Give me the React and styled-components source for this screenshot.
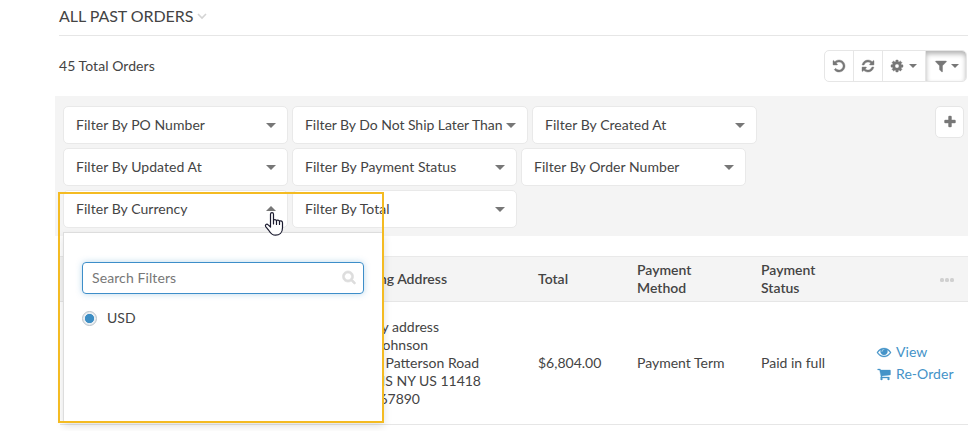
import React from 'react';
import styled, { createGlobalStyle, css } from 'styled-components';

const GlobalStyle = createGlobalStyle`
  *, *::before, *::after { box-sizing: border-box; }
  body {
    margin: 0;
    background: #fff;
    color: #444;
    font: 14px/18px Lato, "Open Sans", sans-serif;
    overflow: hidden;
  }
`;

const paths = {
  undo: 'M1664 896q0 156-61 298t-164 245-245 164-298 61q-172 0-327-72.5t-264-204.5q-7-10-6.5-22.5t8.5-20.5l137-138q10-9 25-9 16 2 23 12 73 95 179 147t225 52q104 0 198.5-40.5t163.5-109.5 109.5-163.5 40.5-198.5-40.5-198.5-109.5-163.5-163.5-109.5-198.5-40.5q-98 0-188 35.5t-160 101.5l137 138q31 30 14 69-17 40-59 40h-448q-26 0-45-19t-19-45v-448q0-42 40-59 39-17 69 14l130 129q107-101 244.5-156.5t284.5-55.5q156 0 298 61t245 164 164 245 61 298z',
  refresh: 'M1639 1056q0 5-1 7-64 268-268 434.5t-478 166.5q-146 0-282.5-55t-243.5-157l-129 129q-19 19-45 19t-45-19-19-45v-448q0-26 19-45t45-19h448q26 0 45 19t19 45-19 45l-137 137q71 66 161 102t187 36q134 0 250-65t186-179q11-17 53-117 8-23 30-23h192q13 0 22.5 9.5t9.5 22.5zm25-800v448q0 26-19 45t-45 19h-448q-26 0-45-19t-19-45 19-45l138-138q-148-137-349-137-134 0-250 65t-186 179q-11 17-53 117-8 23-30 23h-199q-13 0-22.5-9.5t-9.5-22.5v-7q65-268 270-434.5t480-166.5q146 0 284 55.5t245 156.5l130-129q19-19 45-19t45 19 19 45z',
  cog: 'M1152 896q0-106-75-181t-181-75-181 75-75 181 75 181 181 75 181-75 75-181zm512-109v222q0 12-8 23t-20 13l-185 28q-19 54-39 91 35 50 107 138 10 12 10 25t-9 23q-27 37-99 108t-94 71q-12 0-26-9l-138-108q-44 23-91 38-16 136-29 186-7 28-36 28h-222q-14 0-24.5-8.5t-11.5-21.5l-28-184q-49-16-90-37l-141 107q-10 9-25 9-14 0-25-11-126-114-165-168-7-10-7-23 0-12 8-23 15-21 51-66.5t54-70.5q-27-50-41-99l-183-27q-13-2-21-12.5t-8-23.5v-222q0-12 8-23t19-13l186-28q14-46 39-92-40-57-107-138-10-12-10-24 0-10 9-23 26-36 98.5-107.5t94.5-71.5q13 0 26 10l138 107q44-23 91-38 16-136 29-186 7-28 36-28h222q14 0 24.5 8.5t11.5 21.5l28 184q49 16 90 37l142-107q9-9 24-9 13 0 25 10 129 119 165 170 7 8 7 22 0 12-8 23-15 21-51 66.5t-54 70.5q26 50 41 98l183 28q13 2 21 12.5t8 23.5z',
  filter: 'M1595 295q17 41-14 70l-493 493v742q0 42-39 59-13 5-25 5-27 0-45-19l-256-256q-19-19-19-45v-486l-493-493q-31-29-14-70 17-39 59-39h1280q42 0 59 39z',
  plus: 'M1600 736v192q0 40-28 68t-68 28h-416v416q0 40-28 68t-68 28h-192q-40 0-68-28t-28-68v-416h-416q-40 0-68-28t-28-68v-192q0-40 28-68t68-28h416v-416q0-40 28-68t68-28h192q40 0 68 28t28 68v416h416q40 0 68 28t28 68z',
  search: 'M1216 832q0-185-131.5-316.5t-316.5-131.5-316.5 131.5-131.5 316.5 131.5 316.5 316.5 131.5 316.5-131.5 131.5-316.5zm512 832q0 52-38 90t-90 38q-54 0-90-38l-343-342q-179 124-399 124-143 0-273.5-55.5t-225-150-150-225-55.5-273.5 55.5-273.5 150-225 225-150 273.5-55.5 273.5 55.5 225 150 150 225 55.5 273.5q0 220-124 399l343 343q37 37 37 90z',
  eye: 'M1664 960q-152-236-381-353 61 104 61 225 0 185-131.5 316.5t-316.5 131.5-316.5-131.5-131.5-316.5q0-121 61-225-229 117-381 353 133 205 333.5 326.5t434.5 121.5 434.5-121.5 333.5-326.5zm-720-384q0-20-14-34t-34-14q-125 0-214.5 89.5t-89.5 214.5q0 20 14 34t34 14 34-14 14-34q0-86 61-147t147-61q20 0 34-14t14-34zm848 384q0 34-20 69-140 230-376.5 368.5t-499.5 138.5-499.5-139-376.5-368q-20-35-20-69t20-69q140-229 376.5-368t499.5-139 499.5 139 376.5 368q20 35 20 69z',
  cart: 'M704 1536q0 52-38 90t-90 38-90-38-38-90 38-90 90-38 90 38 38 90zm896 0q0 52-38 90t-90 38-90-38-38-90 38-90 90-38 90 38 38 90zm128-1088v512q0 24-16.5 42.5t-40.5 21.5l-1044 122q13 60 13 70 0 16-24 64h920q26 0 45 19t19 45-19 45-45 19h-1024q-26 0-45-19t-19-45q0-11 8-31.5t16-36 21.5-40 15.5-29.5l-177-823h-204q-26 0-45-19t-19-45 19-45 45-19h256q16 0 28.5 6.5t19.5 15.5 13 24.5 8 26 5.5 29.5 4.5 26h1201q26 0 45 19t19 45z',
};

const Glyph = styled.svg`
  display: block;
  flex: none;
  fill: currentColor;
  stroke: currentColor;
  stroke-width: ${p => p.$weight};
`;

const Icon = ({ name, size = 14, weight = 0 }) => (
  <Glyph $weight={weight} width={size} height={size} viewBox="0 0 1792 1792" overflow="visible" aria-hidden="true">
    <path d={paths[name]} />
  </Glyph>
);

const Caret = styled.span`
  flex: none;
  width: 0;
  height: 0;
  border: solid transparent;
  border-width: ${p => p.$size || 5}px ${p => p.$size || 5}px 0;
  border-top-color: #777;
  ${p => p.$up && css`
    border-width: 0 5px 5px;
    border-bottom-color: #777;
    margin-top: -2px;
  `}
`;

const Page = styled.main`
  position: relative;
  width: 973px;
  height: 431px;
  padding: 0 5px 0 55px;
  overflow: hidden;
`;

const Heading = styled.header`
  display: flex;
  align-items: center;
  gap: 4px;
  height: 36px;
  margin-left: 4px;
  padding-bottom: 3px;
  border-bottom: 1px solid #e6e6e6;
`;

const Title = styled.h1`
  margin: 0;
  font-size: 16px;
  line-height: 20px;
  font-weight: 400;
  letter-spacing: -0.06px;
`;

const Summary = styled.div`
  display: flex;
  align-items: center;
  justify-content: space-between;
  height: 60px;
  padding: 0 1px 0 4px;
`;

const Count = styled.span`
  letter-spacing: 0.06px;
`;

const Toolbar = styled.div`
  display: flex;
  height: 32px;
`;

const ToolButton = styled.button`
  display: flex;
  align-items: center;
  justify-content: center;
  gap: ${p => (p.$pressed ? 3 : 5)}px;
  width: ${p => p.$width}px;
  height: 32px;
  margin: 0 0 0 -1px;
  padding: 0 ${p => p.$nudge || 0}px 0 0;
  color: #777;
  background: #fff;
  border: 1px solid #e6e6e6;
  &:first-child { border-radius: 5px 0 0 5px; }
  &:last-child { border-radius: 0 5px 5px 0; }
  ${p => p.$pressed && css`box-shadow: inset 0 3px 5px rgba(0, 0, 0, 0.3);`}
`;

const FilterPanel = styled.section`
  display: flex;
  align-items: flex-start;
  justify-content: space-between;
  height: 140px;
  padding: 10px 4px 0 8px;
  background: #f4f4f4;
`;

const FilterRows = styled.div`
  display: flex;
  flex-direction: column;
  gap: 4px;
`;

const FilterRow = styled.div`
  position: relative;
  display: flex;
  gap: 4px;
`;

const FilterButton = styled.button`
  display: flex;
  align-items: center;
  justify-content: space-between;
  width: ${p => (p.$wide ? 236 : 225)}px;
  height: 38px;
  padding: 0 11px 0 12px;
  font: inherit;
  color: inherit;
  letter-spacing: ${p => (p.$wide ? -0.04 : 0.05)}px;
  white-space: nowrap;
  background: #fff;
  border: 1px solid #e9e9e9;
  border-radius: 5px;
`;

const AddButton = styled.button`
  display: flex;
  align-items: center;
  justify-content: center;
  width: 29px;
  height: 32px;
  padding: 0;
  color: #777;
  background: #fff;
  border: 1px solid #e6e6e6;
  border-radius: 5px;
`;

const Menu = styled.div`
  position: absolute;
  z-index: 2;
  top: 42px;
  left: 0;
  width: 321px;
  height: 190px;
  padding: 29px 20px 0 18px;
  background: #fff;
  border: 1px solid #ddd;
  border-right: 0;
  box-shadow: 0 4px 8px rgba(0, 0, 0, 0.12);
`;

const SearchBox = styled.label`
  display: flex;
  align-items: center;
  justify-content: space-between;
  height: 32px;
  padding: 0 7px 2px 9px;
  color: #ddd;
  border: 1px solid #3d8ec9;
  border-radius: 4px;
  box-shadow: 0 0 6px rgba(61, 142, 201, 0.35);
`;

const SearchInput = styled.input`
  width: 200px;
  padding: 2px 0 0;
  font: inherit;
  letter-spacing: 0.1px;
  border: 0;
  outline: 0;
  &::placeholder { color: #777; opacity: 1; }
`;

const Option = styled.div`
  display: flex;
  align-items: center;
  gap: 10px;
  margin-top: 15px;
`;

const Radio = styled.span`
  width: 15px;
  height: 15px;
  border: 1px solid #b9c2c9;
  border-radius: 50%;
  background: radial-gradient(circle, #3d8ec4 0 4.3px, #e9eef2 5px);
`;

const Table = styled.section`
  margin: 20px 0 0 5px;
`;

const TableRow = styled.div`
  display: grid;
  grid-template-columns: 478px 99px 124px 116px 1fr;
  align-items: center;
  height: 123px;
  border-bottom: 1px solid #e6e6e6;
`;

const HeadRow = styled(TableRow)`
  height: 46px;
  font-weight: 600;
  background: #f4f4f4;
  border-top: 1px solid #e9e9e9;
`;

const Address = styled.div`
  display: flex;
  flex-direction: column;
`;

const AddressLine = styled.span`
  width: ${p => p.$end}px;
  text-align: right;
`;

const Actions = styled.div`
  display: flex;
  flex-direction: column;
  gap: 4px;
  margin-left: -0.5px;
`;

const ActionLink = styled.a`
  display: flex;
  align-items: center;
  gap: 5.5px;
  color: #4593c8;
  letter-spacing: 0.06px;
`;

const More = styled.div`
  display: flex;
  justify-content: flex-end;
  gap: 1px;
  padding: 2px 14px 0 0;
`;

const Dot = styled.span`
  width: 4px;
  height: 4px;
  border-radius: 1.5px;
  background: #d0d0d0;
`;

const Highlight = styled.div`
  position: absolute;
  z-index: 3;
  left: 58px;
  top: 192px;
  width: 326px;
  height: 231px;
  border: 2px solid #f4bb22;
  pointer-events: none;
`;

const Pointer = styled.svg`
  position: absolute;
  z-index: 4;
  left: 264px;
  top: 211px;
`;

const Filter = ({ children, wide, open }) => (
  <FilterButton $wide={wide}>
    {children}
    <Caret $up={open} />
  </FilterButton>
);

export default function App() {
  return (
    <Page>
      <GlobalStyle />
      <Heading>
        <Title>ALL PAST ORDERS</Title>
        <svg width="10" height="8" viewBox="0 0 10 8" fill="none" stroke="#d4d4d4" strokeWidth="1.6">
          <path d="M1 2l4 4 4-4" />
        </svg>
      </Heading>
      <Summary>
        <Count>45 Total Orders</Count>
        <Toolbar>
          <ToolButton $width={30}><Icon name="undo" weight={50} /></ToolButton>
          <ToolButton $width={30}><Icon name="refresh" weight={50} /></ToolButton>
          <ToolButton $width={44} $nudge={2}><Icon name="cog" weight={50} /><Caret $size={4} /></ToolButton>
          <ToolButton $width={42} $pressed><Icon name="filter" weight={50} /><Caret $size={4} /></ToolButton>
        </Toolbar>
      </Summary>
      <FilterPanel>
        <FilterRows>
          <FilterRow>
            <Filter>Filter By PO Number</Filter>
            <Filter wide>Filter By Do Not Ship Later Than</Filter>
            <Filter>Filter By Created At</Filter>
          </FilterRow>
          <FilterRow>
            <Filter>Filter By Updated At</Filter>
            <Filter>Filter By Payment Status</Filter>
            <Filter>Filter By Order Number</Filter>
          </FilterRow>
          <FilterRow>
            <Filter open>Filter By Currency</Filter>
            <Filter>Filter By Total</Filter>
            <Menu>
              <SearchBox>
                <SearchInput placeholder="Search Filters" />
                <Icon name="search" size={14} weight={90} />
              </SearchBox>
              <Option><Radio />USD</Option>
            </Menu>
          </FilterRow>
        </FilterRows>
        <AddButton><Icon name="plus" weight={50} /></AddButton>
      </FilterPanel>
      <Table>
        <HeadRow>
          <AddressLine $end={387}>ng Address</AddressLine>
          <span>Total</span>
          <span>Payment<br />Method</span>
          <span>Payment<br />Status</span>
          <More><Dot /><Dot /><Dot /></More>
        </HeadRow>
        <TableRow>
          <Address>
            <AddressLine $end={379}>y address</AddressLine>
            <AddressLine $end={368}>Johnson</AddressLine>
            <AddressLine $end={419}>Patterson Road</AddressLine>
            <AddressLine $end={421}>NS NY US 11418</AddressLine>
            <AddressLine $end={360}>67890</AddressLine>
          </Address>
          <span>$6,804.00</span>
          <span>Payment Term</span>
          <span>Paid in full</span>
          <Actions>
            <ActionLink><Icon name="eye" weight={40} />View</ActionLink>
            <ActionLink><Icon name="cart" weight={40} />Re-Order</ActionLink>
          </Actions>
        </TableRow>
      </Table>
      <Highlight />
      <Pointer width="20" height="26" viewBox="0 0 20 26" fill="#fff" stroke="#1c1c30" strokeWidth="1.2" strokeLinejoin="round" strokeLinecap="round">
        <path d="M6.5 16V3.2c0-2.2 3-2.2 3 0V10c0-2 3-1.8 3 .3 0-1.9 3-1.5 3 .5 0-1.6 3-1.2 3 .9v5c0 5-3 7.5-7 7.5-3.500 0-5-2-6.500-4.500L1.700 15.600c-1-1.800 1-3.300 2.500-1.700z" />
        <path d="M9.500 10v3M12.500 10.300V13.500M15.500 11v2.500" fill="none" />
      </Pointer>
    </Page>
  );
}
